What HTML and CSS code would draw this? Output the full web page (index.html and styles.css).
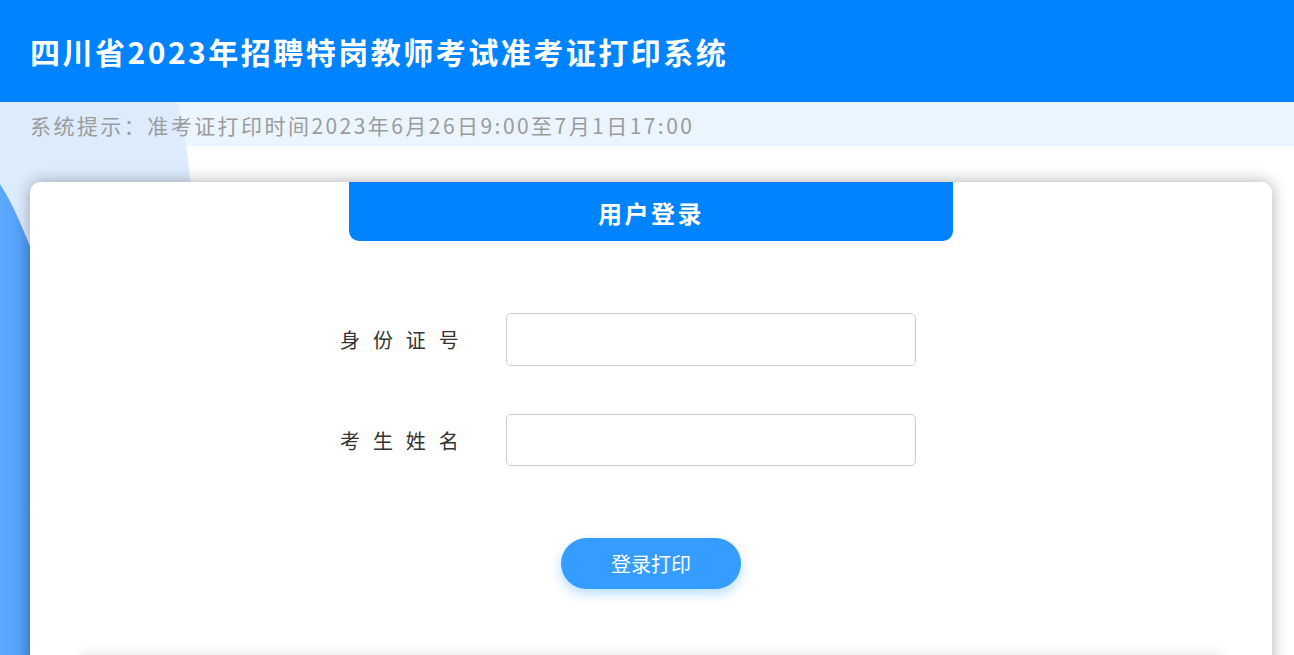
FILE: index.html
```html
<!DOCTYPE html>
<html lang="zh-CN">
<head>
<meta charset="utf-8">
<title>四川省2023年招聘特岗教师考试准考证打印系统</title>
<link rel="stylesheet" href="styles.css">
</head>
<body>
<header class="topbar">
  <h1 class="title">四川省2023年招聘特岗教师考试准考证打印系统</h1>
</header>
<div class="notice">
  <svg class="deco" width="200" height="553" viewBox="0 0 200 553" aria-hidden="true">
    <defs>
      <linearGradient id="blueGrad" x1="0" y1="0" x2="1" y2="0">
        <stop offset="0" stop-color="#5EA9FF"/>
        <stop offset="1" stop-color="#4B98F5"/>
      </linearGradient>
    </defs>
    <circle cx="-300" cy="120" r="492" fill="#DDECFD"/>
    <path d="M0,82 C14,104 26,132 40,172 L40,553 L0,553 Z" fill="url(#blueGrad)"/>
  </svg>
  <p class="notice-text">系统提示：准考证打印时间2023年6月26日9:00至7月1日17:00</p>
</div>
<main class="page">
  <section class="card">
    <div class="card-tab">用户登录</div>
    <form class="form">
      <div class="row">
        <label class="label">身 份 证 号</label>
        <input class="field" type="text">
      </div>
      <div class="row">
        <label class="label">考 生 姓 名</label>
        <input class="field" type="text">
      </div>
    </form>
    <div class="actions">
      <button class="btn" type="button">登录打印</button>
    </div>
    <div class="footer-box"></div>
  </section>
</main>
</body>
</html>
```
FILE: styles.css
```css
* { box-sizing: border-box; }
html, body {
  margin: 0;
  padding: 0;
  background: #fff;
  font-family: "Noto Sans CJK SC", "Noto Sans", sans-serif;
  overflow: hidden;
}
.topbar {
  height: 102px;
  background: #0083FF;
  display: flex;
  align-items: center;
  padding-left: 30px;
}
.title {
  margin: 0;
  color: #fff;
  font-size: 30px;
  font-weight: 700;
  letter-spacing: 2.5px;
  line-height: 1;
}
.notice {
  position: relative;
  height: 44px;
  background: #EBF5FF;
}
.deco {
  position: absolute;
  left: 0;
  top: 0;
  z-index: 0;
}
.notice-text {
  position: relative;
  z-index: 1;
  margin: 0;
  padding-left: 30px;
  line-height: 46px;
  font-size: 21px;
  letter-spacing: 2.45px;
  color: #9B9B9B;
}
.page {
  position: relative;
  z-index: 2;
  padding: 36px 22px 0 30px;
}
.card {
  background: #fff;
  border-radius: 10px;
  box-shadow: 0 0 16px rgba(0, 0, 0, 0.32);
  min-height: 600px;
  overflow: hidden;
}
.card-tab {
  width: 604px;
  height: 59px;
  margin: 0 auto;
  background: #0083FF;
  border-radius: 0 0 10px 10px;
  color: #fff;
  font-size: 24px;
  font-weight: 700;
  letter-spacing: 2.5px;
  text-align: center;
  line-height: 62px;
}
.form {
  margin: 72px 0 0 310px;
  width: 576px;
  display: flex;
  flex-direction: column;
  gap: 48px;
}
.row {
  display: flex;
  align-items: center;
  height: 53px;
}
.row + .row {
  height: 52px;
}
.label {
  width: 166px;
  font-size: 20px;
  letter-spacing: 4.2px;
  color: #333;
}
.field {
  width: 410px;
  height: 100%;
  border: 1px solid #CCCCCC;
  border-radius: 5px;
  outline: none;
  background: #fff;
}
.actions {
  display: flex;
  justify-content: center;
  margin-top: 72px;
}
.btn {
  width: 180px;
  height: 51px;
  border: none;
  border-radius: 26px;
  background: #349DFF;
  color: #fff;
  font-family: "Noto Sans CJK SC", sans-serif;
  font-size: 20px;
  box-shadow: 0 5px 12px rgba(52, 157, 255, 0.35);
}
.footer-box {
  width: 1140px;
  height: 100px;
  margin: 66px auto 0;
  background: #fff;
  box-shadow: 0 0 12px rgba(0, 0, 0, 0.12);
}
```
